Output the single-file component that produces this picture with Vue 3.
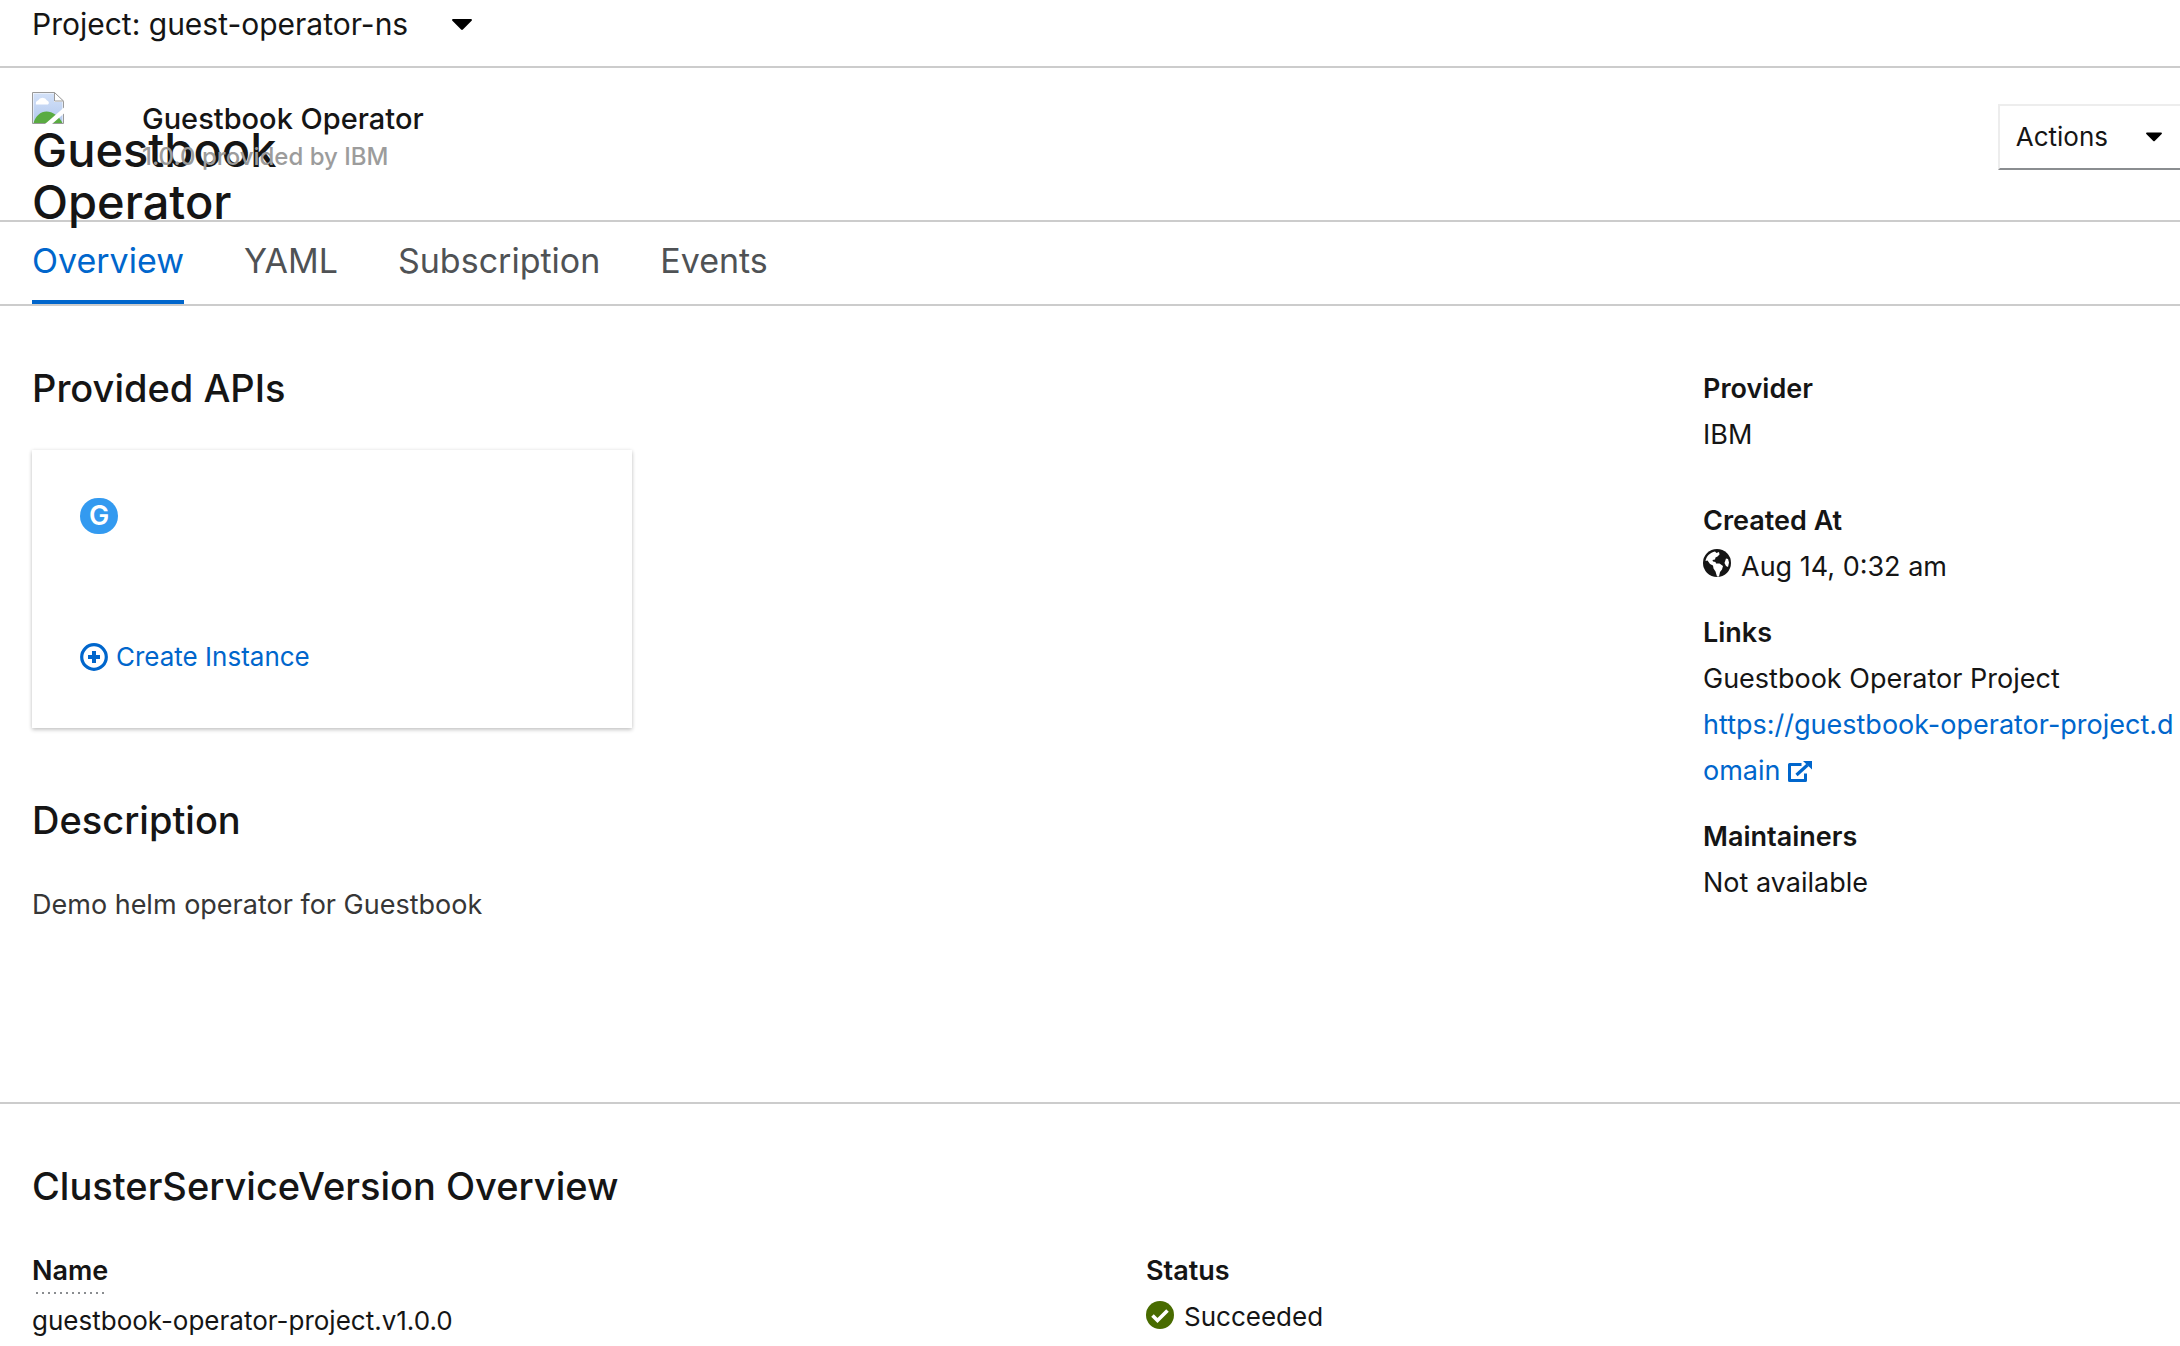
<script setup>
import { ref } from 'vue'

const tabs = ['Overview', 'YAML', 'Subscription', 'Events']
const activeTab = ref('Overview')
</script>

<template>
  <div class="page">
    <div class="project-bar">
      <button type="button" class="project-toggle">
        <span>Project: guest-operator-ns</span>
        <svg class="caret-large" viewBox="0 0 20 11" aria-hidden="true">
          <path d="M1.2 0h17.6c1 0 1.5 1.1.8 1.8l-8.7 8.7c-.5.5-1.3.5-1.8 0L.4 1.8C-.3 1.1.2 0 1.2 0z" />
        </svg>
      </button>
    </div>

    <header class="masthead">
      <div class="logo">
        <svg class="broken-image" viewBox="0 0 32 32" aria-hidden="true">
          <defs>
            <linearGradient id="sky" x1="0" y1="0" x2="0" y2="1">
              <stop offset="0" stop-color="#d3e1f8" />
              <stop offset="1" stop-color="#b3c9ee" />
            </linearGradient>
          </defs>
          <path d="M.5.5h22l9 9v22H.5z" fill="#fff" stroke="#9a9a9a" />
          <path d="M1.5 1.5h20.500v8.500h8.500v20.500h-29z" fill="url(#sky)" />
          <path d="M4 12.500a3 3 0 0 1 2-4 5 5 0 0 1 9 0c2 .5 2.500 3 1 4z" fill="#fff" />
          <path d="M1.500 31c2-7 7-11.500 13-11.500s12 4 16 11.500z" fill="#5aab41" />
          <path d="M22.500.5l9 8.500h-9z" fill="#fff" stroke="#9a9a9a" />
          <path d="M13 32L32 15.500v6L20 32z" fill="#fff" />
        </svg>
        <span class="logo-text">Guestbook Operator</span>
      </div>
      <div class="titles">
        <h1 class="title">Guestbook Operator</h1>
        <p class="subtitle">1.0.0 provided by IBM</p>
      </div>
      <button type="button" class="actions">
        <span>Actions</span>
        <svg class="caret" viewBox="0 0 20 11" aria-hidden="true">
          <path d="M1.2 0h17.6c1 0 1.5 1.1.8 1.8l-8.7 8.7c-.5.5-1.3.5-1.8 0L.4 1.8C-.3 1.1.2 0 1.2 0z" />
        </svg>
      </button>
    </header>

    <nav class="tabs">
      <a
        v-for="tab in tabs"
        :key="tab"
        href="#"
        class="tab"
        :class="{ active: tab === activeTab }"
        @click.prevent="activeTab = tab"
      >{{ tab }}</a>
    </nav>

    <main>
      <section class="overview">
        <div>
          <h2>Provided APIs</h2>
          <article class="card">
            <span class="badge">G</span>
            <a href="#" class="create">
              <svg class="plus" viewBox="0 0 28 28" aria-hidden="true">
                <circle cx="14" cy="14" r="12.3" fill="none" stroke="currentColor" stroke-width="3.2" />
                <path d="M14 8v12M8 14h12" stroke="currentColor" stroke-width="4" />
              </svg>
              <span>Create Instance</span>
            </a>
          </article>
          <h2 class="spaced">Description</h2>
          <p class="description">Demo helm operator for Guestbook</p>
        </div>

        <dl class="facts">
          <div class="fact wide">
            <dt>Provider</dt>
            <dd>IBM</dd>
          </div>
          <div class="fact">
            <dt>Created At</dt>
            <dd class="with-icon">
              <svg class="globe" viewBox="0 0 28 28" aria-hidden="true">
                <circle cx="14" cy="14" r="14" fill="#151515" />
                <path d="M2.5 12C3.5 7 7 3.5 12 2.5l1.500 1.500 2.500-1 .5 2.500-2 2-2 1-.5 2-2.500.5.5 1.500 2.500.5.500 1.500 3.500 0 3.500 2.500-1 3.500-2 2.500-1 4.500h-2l-1.500-5-2-3-.5-3-3-1.500-2.500-3.500z" fill="#fff" />
                <path d="M23 9.500l2 .5 1 3.500-1 4.500-2-1-1.500-3z" fill="#fff" />
              </svg>
              <span>Aug 14, 0:32 am</span>
            </dd>
          </div>
          <div class="fact">
            <dt>Links</dt>
            <dd>
              Guestbook Operator Project<br>
              <a href="#">https://guestbook-operator-project.d<wbr>omain<svg class="external" viewBox="0 0 25 22" aria-hidden="true">
                <path d="M14.5 3.5H2.5v16h16v-7" fill="none" stroke="currentColor" stroke-width="3" stroke-linejoin="round" />
                <path d="M9.5 14L20.5 4" fill="none" stroke="currentColor" stroke-width="3.2" />
                <path d="M16 0h9v8.5z" fill="currentColor" />
              </svg></a>
            </dd>
          </div>
          <div class="fact">
            <dt>Maintainers</dt>
            <dd>Not available</dd>
          </div>
        </dl>
      </section>

      <section class="csv">
        <h2>ClusterServiceVersion Overview</h2>
        <dl class="csv-grid">
          <div>
            <dt><span class="hint">Name</span></dt>
            <dd class="name-value">guestbook-operator-project.v1.0.0</dd>
          </div>
          <div>
            <dt>Status</dt>
            <dd class="with-icon">
              <svg class="check" viewBox="0 0 28 28" aria-hidden="true">
                <circle cx="14" cy="14" r="14" fill="#486b00" />
                <path d="M6.5 14.5l5 5L21.5 9.500" fill="none" stroke="#fff" stroke-width="3.6" />
              </svg>
              <span>Succeeded</span>
            </dd>
          </div>
        </dl>
      </section>
    </main>
  </div>
</template>

<style>
body {
  margin: 0;
  background: #fff;
  overflow-x: hidden;
}
</style>

<style scoped>
.page {
  font-family: Inter, "Liberation Sans", sans-serif;
  font-size: 26px;
  line-height: 46px;
  color: #151515;
}

h1, h2, p, dl, dd {
  margin: 0;
}

button {
  padding: 0;
  border: 0;
  background: none;
  font: inherit;
  color: inherit;
  cursor: pointer;
}

a {
  color: #06c;
  text-decoration: none;
}

svg {
  flex: none;
}

.project-bar {
  padding: 0 32px 18px;
  border-bottom: 2px solid #ccc;
}

.project-toggle {
  display: flex;
  align-items: center;
  gap: 44px;
  font-size: 30px;
  line-height: 48px;
}

.caret-large {
  width: 20px;
  height: 11px;
}

.caret {
  width: 16px;
  height: 10px;
}

.masthead {
  display: flex;
  align-items: flex-start;
  padding: 24px 0 24px 32px;
  border-bottom: 2px solid #ccc;
}

/* The fallback text is larger than its slot and spills over the title. */
.logo {
  width: 80px;
  height: 104px;
  margin-right: 30px;
}

.broken-image {
  display: block;
  width: 32px;
  height: 32px;
}

.logo-text {
  display: block;
  font-size: 47px;
  font-weight: 500;
  line-height: 52px;
}

.titles {
  flex: 1;
  padding-top: 8px;
  line-height: 38px;
}

.title {
  font-size: 29px;
  font-weight: 500;
}

.subtitle {
  position: relative;
  font-size: 24px;
  font-weight: 500;
  color: #9c9c9c;
}

.actions {
  display: flex;
  align-items: center;
  gap: 38px;
  height: 66px;
  margin-top: 12px;
  padding: 0 18px 0 16px;
  border: 2px solid #ededed;
  border-right: 0;
  border-bottom-color: #8a8d90;
}

.tabs {
  display: flex;
  gap: 60px;
  padding: 0 32px;
  border-bottom: 2px solid #ccc;
}

.tab {
  border-bottom: 4px solid transparent;
  font-size: 34px;
  line-height: 78px;
  color: #4f5255;
}

.tab.active {
  border-bottom-color: #06c;
  color: #06c;
}

h2 {
  font-size: 38px;
  font-weight: 500;
  line-height: 48px;
}

.overview {
  display: grid;
  grid-template-columns: 1fr 477px;
  padding: 58px 0 174px 32px;
  border-bottom: 2px solid #ccc;
}

.card {
  box-sizing: border-box;
  display: flex;
  flex-direction: column;
  align-items: flex-start;
  justify-content: space-between;
  width: 600px;
  height: 278px;
  margin-top: 38px;
  padding: 48px;
  box-shadow: 0 2px 4px rgba(3, 3, 3, 0.2), 0 0 4px rgba(3, 3, 3, 0.08);
}

.badge {
  width: 38px;
  border-radius: 18px;
  background: #339af0;
  font-size: 27px;
  font-weight: 600;
  line-height: 36px;
  text-align: center;
  color: #fff;
}

.create {
  display: flex;
  align-items: center;
  gap: 8px;
}

.plus {
  width: 28px;
  height: 28px;
}

.spaced {
  margin-top: 68px;
}

.description {
  margin-top: 38px;
  font-size: 27px;
  color: #363636;
}

.facts {
  padding-top: 2px;
}

.fact {
  margin-bottom: 20px;
}

.fact.wide {
  margin-bottom: 40px;
}

dt {
  font-size: 27px;
  font-weight: 600;
}

.facts dd {
  font-size: 27px;
}

.with-icon {
  display: flex;
  align-items: center;
  gap: 10px;
}

.globe {
  width: 28px;
  height: 28px;
  margin-bottom: 8px;
}

.external {
  width: 25px;
  height: 22px;
  margin-left: 6px;
  vertical-align: -3px;
}

.csv {
  padding: 58px 0 0 32px;
}

.csv-grid {
  display: grid;
  grid-template-columns: 1fr 1fr;
  gap: 80px;
  margin-top: 38px;
}

.hint {
  display: inline-block;
  background: repeating-linear-gradient(to right, transparent 0 4px, #8a8d90 4px 6px) left bottom / 100% 2px no-repeat;
}

.name-value {
  margin-top: 4px;
}

.check {
  width: 28px;
  height: 28px;
  margin-bottom: 4px;
}
</style>
